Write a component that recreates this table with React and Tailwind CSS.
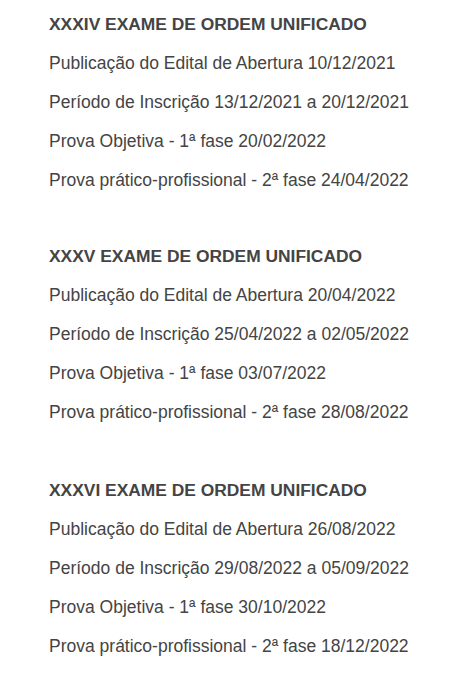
const exams = [
  {
    title: 'XXXIV EXAME DE ORDEM UNIFICADO',
    lines: [
      'Publicação do Edital de Abertura 10/12/2021',
      'Período de Inscrição 13/12/2021 a 20/12/2021',
      'Prova Objetiva - 1ª fase 20/02/2022',
      'Prova prático-profissional - 2ª fase 24/04/2022',
    ],
  },
  {
    title: 'XXXV EXAME DE ORDEM UNIFICADO',
    lines: [
      'Publicação do Edital de Abertura 20/04/2022',
      'Período de Inscrição 25/04/2022 a 02/05/2022',
      'Prova Objetiva - 1ª fase 03/07/2022',
      'Prova prático-profissional - 2ª fase 28/08/2022',
    ],
  },
  {
    title: 'XXXVI EXAME DE ORDEM UNIFICADO',
    lines: [
      'Publicação do Edital de Abertura 26/08/2022',
      'Período de Inscrição 29/08/2022 a 05/09/2022',
      'Prova Objetiva - 1ª fase 30/10/2022',
      'Prova prático-profissional - 2ª fase 18/12/2022',
    ],
  },
];

const App = () => {
  return (
    <div className="min-h-screen bg-white px-[49px] pt-[5px] text-[#444444] font-['Liberation_Sans',Arial,sans-serif]">
      {exams.map((exam, i) => (
        <div key={exam.title} className={i === 0 ? 'mb-[37px]' : 'mb-[39px]'}>
          <h3 className="text-[17.4px] font-bold leading-[39px]">{exam.title}</h3>
          {exam.lines.map((line) => (
            <p key={line} className="text-[17.5px] leading-[39px]">{line}</p>
          ))}
        </div>
      ))}
    </div>
  );
};

export default App;
